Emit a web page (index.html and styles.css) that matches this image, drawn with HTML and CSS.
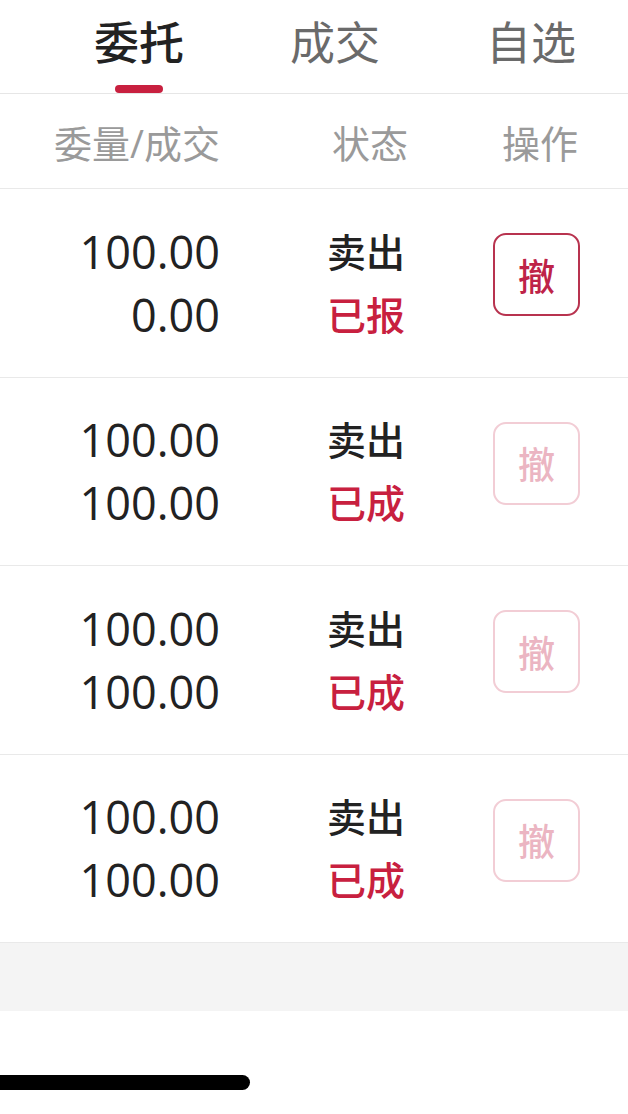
FILE: index.html
```html
<!DOCTYPE html>
<html>
<head>
    <title>委托</title>
    <meta charset="UTF-8">
    <meta name="viewport" content="width=device-width, initial-scale=1.0">
    <link rel="stylesheet" href="styles.css">
</head>
<body>
    <div class="tabs">
        <div class="tab active"><span class="tab-label">委托</span><span class="tab-line"></span></div>
        <div class="tab"><span class="tab-label">成交</span><span class="tab-line"></span></div>
        <div class="tab"><span class="tab-label">自选</span><span class="tab-line"></span></div>
    </div>

    <div class="row head">
        <div class="col-amount">委量/成交</div>
        <div class="col-status">状态</div>
        <div class="col-action">操作</div>
    </div>

    <div class="row order">
        <div class="col-amount"><div>100.00</div><div>0.00</div></div>
        <div class="col-status"><div>卖出</div><div class="red">已报</div></div>
        <div class="col-action"><button class="cancel">撤</button></div>
    </div>
    <div class="row order">
        <div class="col-amount"><div>100.00</div><div>100.00</div></div>
        <div class="col-status"><div>卖出</div><div class="red">已成</div></div>
        <div class="col-action"><button class="cancel disabled">撤</button></div>
    </div>
    <div class="row order">
        <div class="col-amount"><div>100.00</div><div>100.00</div></div>
        <div class="col-status"><div>卖出</div><div class="red">已成</div></div>
        <div class="col-action"><button class="cancel disabled">撤</button></div>
    </div>
    <div class="row order">
        <div class="col-amount"><div>100.00</div><div>100.00</div></div>
        <div class="col-status"><div>卖出</div><div class="red">已成</div></div>
        <div class="col-action"><button class="cancel disabled">撤</button></div>
    </div>

    <div class="gap"></div>

    <div class="footer">
        <div class="home-bar"></div>
    </div>
</body>
</html>
```

FILE: styles.css
```css
body {
    margin: 0;
    background: #fff;
    font-family: "Open Sans", "Noto Sans CJK SC", sans-serif;
    color: #222;
}
.tabs {
    display: grid;
    grid-template-columns: 196px 196px 196px;
    padding-left: 41px;
    border-bottom: 1px solid #e6e6e6;
}
.tab {
    display: flex;
    flex-direction: column;
    align-items: center;
    padding-top: 15px;
}
.tab-label {
    font-size: 45px;
    line-height: 56px;
    color: #6a6a6a;
}
.tab-line {
    width: 48px;
    height: 8px;
    margin-top: 14px;
    border-radius: 4px;
}
.tab.active .tab-label {
    color: #222;
    font-weight: 500;
}
.tab.active .tab-line {
    background: #c8203f;
}
.row {
    display: flex;
    align-items: center;
    border-bottom: 1px solid #e9e9e9;
}
.head {
    height: 94px;
    font-size: 38px;
    color: #9a9a9a;
}
.col-amount {
    width: 220px;
    text-align: right;
}
.col-status {
    margin-left: 107px;
}
.col-action {
    margin-left: auto;
    margin-right: 48px;
}
.head .col-status {
    margin-left: 112px;
}
.head .col-action {
    margin-right: 50px;
}
.order {
    height: 187.5px;
    font-size: 39px;
    font-weight: 500;
    line-height: 63px;
}
.order .col-amount {
    font-size: 45px;
    font-weight: 500;
}
.red {
    color: #c8203f;
}
.cancel {
    width: 87px;
    height: 83px;
    margin-bottom: 16px;
    padding: 0;
    border: 2px solid #b8334f;
    border-radius: 13px;
    background: #fff;
    color: #be2348;
    font-family: "Noto Sans CJK SC", sans-serif;
    font-size: 37px;
    font-weight: 500;
}
.cancel.disabled {
    border-color: #f2cdd5;
    color: #ebb5c2;
}
.gap {
    height: 68px;
    background: #f4f4f4;
}
.footer {
    height: 103px;
    padding-top: 64px;
    box-sizing: border-box;
}
.home-bar {
    width: 250px;
    height: 15px;
    background: #000;
    border-radius: 0 8px 8px 0;
}
```
